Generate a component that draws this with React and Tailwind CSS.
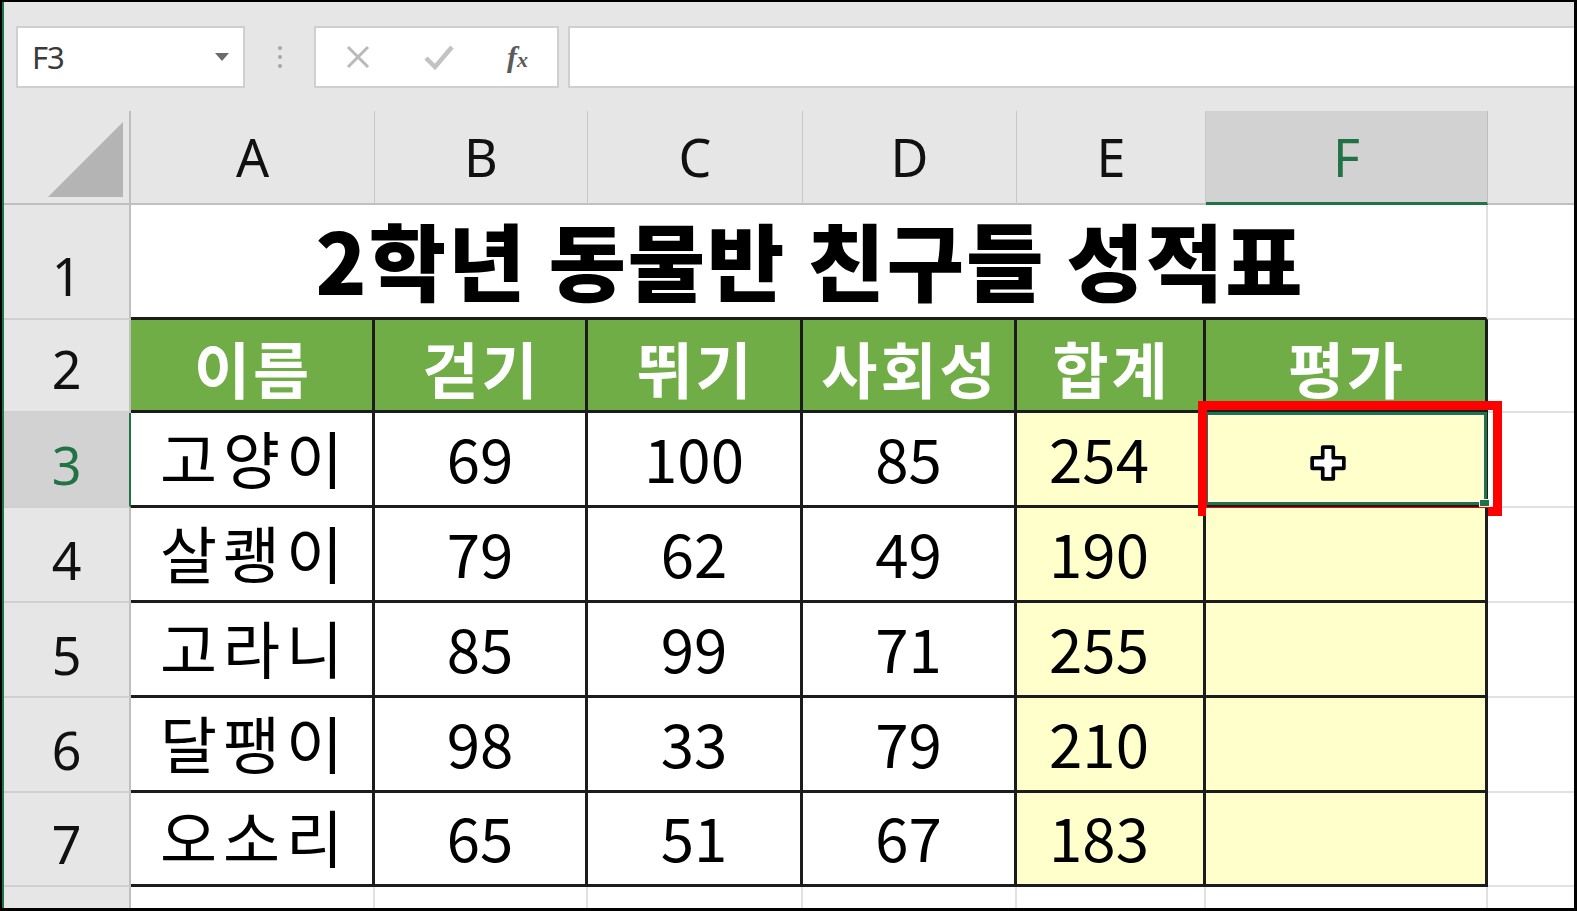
import React from 'react';

const KR = "font-['Noto_Sans_CJK_KR',sans-serif]";
const LAT = "font-['Noto_Sans',sans-serif]";

const rows = [
	['고양이', 69, 100, 85, 254],
	['살쾡이', 79, 62, 49, 190],
	['고라니', 85, 99, 71, 255],
	['달팽이', 98, 33, 79, 210],
	['오소리', 65, 51, 67, 183],
];

const heads = ['이름', '걷기', '뛰기', '사회성', '합계', '평가'];

function Toolbar() {
	return (
		<div className="h-[109px] bg-[#e6e6e6] flex items-start pt-[24px] pl-[12px]">
			{/* name box */}
			<div className="w-[229px] h-[62px] bg-white border-2 border-[#cfcfcf] flex items-center justify-between pl-[14px] pr-[14px]">
				<span className={`${LAT} text-[31px] leading-none text-[#3a3a3a] tracking-[-1px]`}>F3</span>
				<svg width="14" height="8" viewBox="0 0 14 8">
					<path d="M0 0 L14 0 L7 8 Z" fill="#6b6b6b" />
				</svg>
			</div>
			<div className="w-[69px] h-[62px] flex flex-col items-center justify-center gap-[5px]">
				<span className="w-[4px] h-[4px] rounded-full bg-[#a6a6a6]" />
				<span className="w-[4px] h-[4px] rounded-full bg-[#a6a6a6]" />
				<span className="w-[4px] h-[4px] rounded-full bg-[#a6a6a6]" />
			</div>
			{/* cancel / enter / fx */}
			<div className="w-[245px] h-[62px] bg-white border-2 border-[#cfcfcf] flex items-center pl-[29px]">
				<svg width="26" height="26" viewBox="0 0 26 26">
					<path d="M3 3 L23 23 M23 3 L3 23" stroke="#b9b9b9" strokeWidth="3" />
				</svg>
				<svg className="ml-[52px]" width="32" height="28" viewBox="0 0 32 28">
					<path d="M3 15 L12 24 L29 4" stroke="#c2c2c2" strokeWidth="4.5" fill="none" />
				</svg>
				<span className="ml-[52px] font-['Liberation_Serif',serif] italic font-bold text-[#5a5a5a] text-[30px] leading-none">
					f<span className="text-[22px]">x</span>
				</span>
			</div>
			<div className="ml-[9px] flex-1 h-[62px] bg-white border-2 border-r-0 border-[#cfcfcf]" />
		</div>
	);
}

function App() {
	return (
		<div className="w-[1577px] h-[911px] border-t-2 border-r-[3px] border-b-[3px] border-l-2 border-black overflow-hidden">
			<div className="h-full border-l-2 border-[#217346] flex flex-col bg-white">
				<Toolbar />
				<div className="grid grid-cols-[127px_244px_213px_215px_214px_189px_282px_1fr] grid-rows-[94px_115px_93px_95px_95px_95px_95px_94px_1fr] flex-1">
					{/* column headers */}
					<div className="bg-[#e6e6e6] border-r-2 border-b-2 border-[#bfbfbf] flex items-end justify-end pr-[6px] pb-[6px]">
						<svg width="75" height="75" viewBox="0 0 75 75">
							<path d="M0 75 L75 0 L75 75 Z" fill="#b4b4b4" />
						</svg>
					</div>
					{['A', 'B', 'C', 'D', 'E'].map((c) => (
						<div key={c} className={`bg-[#e6e6e6] border-r border-r-[#c8c8c8] border-b-2 border-b-[#bfbfbf] flex items-center justify-center ${LAT} text-[52px] leading-none text-[#111]`}>
							{c}
						</div>
					))}
					<div className={`bg-[#d2d2d2] border-r border-r-[#bdbdbd] border-b-[3px] border-b-[#217346] flex items-center justify-center ${LAT} text-[52px] leading-none text-[#217346]`}>
						F
					</div>
					<div className="bg-[#e6e6e6] border-b-2 border-[#bfbfbf]" />

					{/* row 1 */}
					<div className={`bg-[#e6e6e6] border-r-2 border-r-[#bfbfbf] border-b-2 border-b-[#d0d0d0] flex items-end justify-center pb-[16px] ${LAT} text-[52px] leading-none text-[#111]`}>1</div>
					<div className={`col-span-6 border-r-2 border-r-[#e1e1e1] border-b-[3px] border-b-[#1c1c1c] flex items-end justify-center pb-[16px] pl-[3px] ${KR} font-black text-[84px] tracking-[2px] leading-none text-black`}>
						2학년 동물반 친구들 성적표
					</div>
					<div className="border-b-2 border-[#e1e1e1]" />

					{/* row 2 */}
					<div className={`bg-[#e6e6e6] border-r-2 border-r-[#bfbfbf] border-b-2 border-b-[#d0d0d0] flex items-end justify-center pb-[16px] ${LAT} text-[52px] leading-none text-[#111]`}>2</div>
					{heads.map((h) => (
						<div key={h} className={`bg-[#70ad47] border-r-[3px] border-b-[3px] border-[#1c1c1c] flex items-end justify-center pb-[12px] pl-[3px] ${KR} font-bold text-[61px] tracking-[3px] leading-none text-white`}>
							{h}
						</div>
					))}
					<div className="border-b-2 border-[#e1e1e1]" />

					{/* data rows */}
					{rows.map((r, i) => {
						const sel = i === 0;
						return (
							<React.Fragment key={r[0]}>
								<div className={`${sel ? 'bg-[#d2d2d2] border-r-[#217346] text-[#217346]' : 'bg-[#e6e6e6] border-r-[#bfbfbf] text-[#111]'} border-r-2 border-b-2 border-b-[#d0d0d0] flex items-end justify-center pb-[15px] ${LAT} text-[52px] leading-none`}>
									{i + 3}
								</div>
								<div className={`border-r-[3px] border-b-[3px] border-[#1c1c1c] flex items-end justify-center pb-[17px] pl-[6px] ${KR} text-[62px] tracking-[6px] leading-none text-black`}>
									{r[0]}
								</div>
								{r.slice(1, 4).map((v, j) => (
									<div key={j} className={`border-r-[3px] border-b-[3px] border-[#1c1c1c] flex items-end justify-center pb-[18px] ${KR} text-[60px] leading-none text-black`}>
										{v}
									</div>
								))}
								<div className={`bg-[#ffffcc] border-r-[3px] border-b-[3px] border-[#1c1c1c] flex items-end justify-center pb-[18px] pr-[22px] ${KR} text-[60px] leading-none text-black`}>
									{r[4]}
								</div>
								<div className="relative bg-[#ffffcc] border-r-[3px] border-b-[3px] border-[#1c1c1c]">
									{sel && (
										<>
											<div className="absolute -top-[1px] -right-[2px] bottom-0 -left-[1px] border-[3px] border-[#217346] shadow-[inset_0_0_0_1px_white]" />
											<div className="absolute -right-[5px] -bottom-[2px] w-[11px] h-[8px] bg-[#217346] border border-white" />
											<div className="absolute -left-[8px] -top-[12px] -right-[17px] -bottom-[11px] border-[9px] border-[#ff0000]" />
											<svg className="absolute left-[103px] top-[31px]" width="38" height="38" viewBox="0 0 36 36">
												<path d="M13 3 H23 V13 H33 V23 H23 V33 H13 V23 H3 V13 H13 Z" fill="white" stroke="black" strokeWidth="3.5" strokeLinejoin="round" />
											</svg>
										</>
									)}
								</div>
								<div className="border-b-2 border-[#e1e1e1]" />
							</React.Fragment>
						);
					})}

					{/* row 8 */}
					<div className="bg-[#e6e6e6] border-r-2 border-[#bfbfbf]" />
					{['A', 'B', 'C', 'D', 'E', 'F'].map((c) => (
						<div key={c} className="border-r-2 border-[#e1e1e1]" />
					))}
					<div />
				</div>
			</div>
		</div>
	);
}

export default App;
